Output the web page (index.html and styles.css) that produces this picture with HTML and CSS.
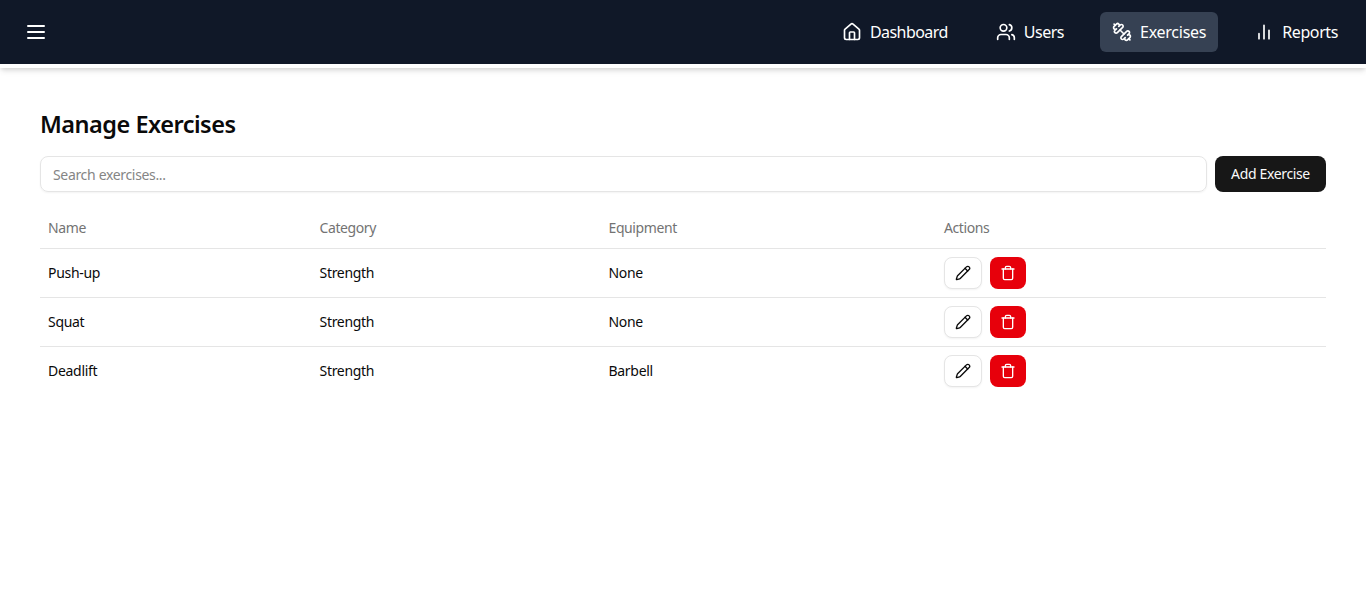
FILE: index.html
```html
<!DOCTYPE html>
<html lang="en">
<head>
<meta charset="utf-8">
<title>Manage Exercises</title>
<link rel="stylesheet" href="styles.css">
</head>
<body>
<svg class="sprite" aria-hidden="true">
  <symbol id="pencil" viewBox="0 0 24 24"><path d="M21.174 6.812a1 1 0 0 0-3.986-3.987L3.842 16.174a2 2 0 0 0-.5.83l-1.321 4.352a.5.5 0 0 0 .623.622l4.353-1.32a2 2 0 0 0 .83-.497z"/><path d="m15 5 4 4"/></symbol>
  <symbol id="trash" viewBox="0 0 24 24"><path d="M3 6h18"/><path d="M19 6v14c0 1-1 2-2 2H7c-1 0-2-1-2-2V6"/><path d="M8 6V4c0-1 1-2 2-2h4c1 0 2 1 2 2v2"/></symbol>
</svg>
<div class="topbar">
<header class="navbar">
  <button class="menu" aria-label="Menu"><svg class="icon menu-icon" viewBox="0 0 24 24"><path d="M4 12h16M4 6h16M4 18h16"/></svg></button>
  <nav class="links">
    <a class="link dashboard"><svg class="icon" viewBox="0 0 24 24"><path d="M15 21v-8a1 1 0 0 0-1-1h-4a1 1 0 0 0-1 1v8"/><path d="M3 10a2 2 0 0 1 .709-1.528l7-5.999a2 2 0 0 1 2.582 0l7 5.999A2 2 0 0 1 21 10v9a2 2 0 0 1-2 2H5a2 2 0 0 1-2-2z"/></svg><span>Dashboard</span></a>
    <a class="link users"><svg class="icon" viewBox="0 0 24 24"><path d="M16 21v-2a4 4 0 0 0-4-4H6a4 4 0 0 0-4 4v2"/><circle cx="9" cy="7" r="4"/><path d="M22 21v-2a4 4 0 0 0-3-3.87"/><path d="M16 3.13a4 4 0 0 1 0 7.75"/></svg><span>Users</span></a>
    <a class="link active"><svg class="icon" viewBox="0 0 24 24"><path d="M14.4 14.4 9.6 9.6"/><path d="M18.657 21.485a2 2 0 1 1-2.829-2.828l-1.767 1.768a2 2 0 1 1-2.829-2.829l6.364-6.364a2 2 0 1 1 2.829 2.829l-1.768 1.767a2 2 0 1 1 2.828 2.829z"/><path d="m21.5 21.5-1.4-1.4"/><path d="M3.9 3.9 2.5 2.5"/><path d="M6.404 12.768a2 2 0 1 1-2.829-2.829l1.768-1.767a2 2 0 1 1-2.828-2.829l2.828-2.828a2 2 0 1 1 2.829 2.828l1.767-1.768a2 2 0 1 1 2.829 2.829z"/></svg><span>Exercises</span></a>
    <a class="link reports"><svg class="icon" viewBox="0 0 24 24"><path d="M18 20V10M12 20V4M6 20v-6"/></svg><span>Reports</span></a>
  </nav>
</header>
</div>
<main class="page">
  <h1 class="title">Manage Exercises</h1>
  <div class="toolbar">
    <input class="search" type="text" placeholder="Search exercises...">
    <button class="add">Add Exercise</button>
  </div>
  <table class="table">
    <colgroup><col class="c-name"><col class="c-category"><col class="c-equipment"><col></colgroup>
    <thead><tr><th>Name</th><th>Category</th><th>Equipment</th><th>Actions</th></tr></thead>
    <tbody>
      <tr><td>Push-up</td><td>Strength</td><td>None</td><td><div class="actions"><button class="btn edit" aria-label="Edit"><svg class="icon small"><use href="#pencil"/></svg></button><button class="btn delete" aria-label="Delete"><svg class="icon small"><use href="#trash"/></svg></button></div></td></tr>
      <tr><td>Squat</td><td>Strength</td><td>None</td><td><div class="actions"><button class="btn edit" aria-label="Edit"><svg class="icon small"><use href="#pencil"/></svg></button><button class="btn delete" aria-label="Delete"><svg class="icon small"><use href="#trash"/></svg></button></div></td></tr>
      <tr><td>Deadlift</td><td>Strength</td><td>Barbell</td><td><div class="actions"><button class="btn edit" aria-label="Edit"><svg class="icon small"><use href="#pencil"/></svg></button><button class="btn delete" aria-label="Delete"><svg class="icon small"><use href="#trash"/></svg></button></div></td></tr>
    </tbody>
  </table>
</main>
</body>
</html>
```
FILE: styles.css
```css
* { box-sizing: border-box; }
body { margin: 0; background: #fff; color: #0a0a0a; font-family: "Noto Sans", sans-serif; font-size: 14px; line-height: 20px; letter-spacing: -0.3px; }
button, input { font: inherit; letter-spacing: inherit; margin: 0; }
.sprite { display: none; }
.icon { width: 20px; height: 20px; flex: none; fill: none; stroke: currentColor; stroke-width: 2; stroke-linecap: round; stroke-linejoin: round; }
.menu-icon { width: 24px; height: 24px; }
.small { width: 16px; height: 16px; }
.topbar { padding-bottom: 4px; background: #fff; box-shadow: 0 4px 6px -1px rgb(0 0 0 / .1), 0 2px 4px -1px rgb(0 0 0 / .1); }
.navbar { height: 64px; padding: 0 16px; display: flex; align-items: center; justify-content: space-between; background: #101828; color: #fff; }
.menu { display: flex; padding: 8px; border: 0; background: none; color: inherit; }
.links { display: flex; gap: 24px; }
.link { display: flex; align-items: center; gap: 8px; height: 40px; padding: 0 12px; border-radius: 6px; font-size: 16px; line-height: 24px; }
.dashboard { letter-spacing: -0.55px; }
.users { letter-spacing: -0.5px; }
.active { background: #364153; letter-spacing: -0.25px; }
.reports { letter-spacing: -0.4px; }
.page { padding: 40px; }
.title { margin: 0 0 16px; font-size: 23.5px; line-height: 32px; font-weight: 600; letter-spacing: -0.5px; }
.toolbar { display: flex; gap: 8px; margin-bottom: 16px; }
.search { flex: 1; min-width: 0; height: 36px; padding: 4px 12px; border: 1px solid #e5e5e5; border-radius: 8px; background: transparent; box-shadow: 0 1px 2px rgb(0 0 0 / .05); outline: none; letter-spacing: -0.33px; }
.search::placeholder { color: #858585; opacity: 1; }
.add { height: 36px; padding: 0 16px; border: 0; border-radius: 8px; background: #171717; color: #fafafa; width: 111px; white-space: nowrap; letter-spacing: -0.35px; }
.table { width: 100%; table-layout: fixed; border-collapse: collapse; }
.c-name { width: 271.5px; }
.c-category { width: 289px; }
.c-equipment { width: 335.5px; }
.table th { height: 40px; padding: 0 8px; text-align: left; font-weight: 400; color: #737373; letter-spacing: -0.4px; }
.table td { padding: 8px; }
.table tr { border-bottom: 1px solid #e5e5e5; }
.table tbody tr:last-child { border-bottom: 0; }
.actions { display: flex; gap: 8px; }
.btn { display: flex; align-items: center; justify-content: center; height: 32px; border-radius: 8px; }
.edit { width: 38px; padding: 0; border: 1px solid #e5e5e5; background: #fff; color: #0a0a0a; box-shadow: 0 1px 2px rgb(0 0 0 / .05); }
.delete { width: 36px; padding: 0; border: 0; background: #e7000b; color: #fff; }
```
